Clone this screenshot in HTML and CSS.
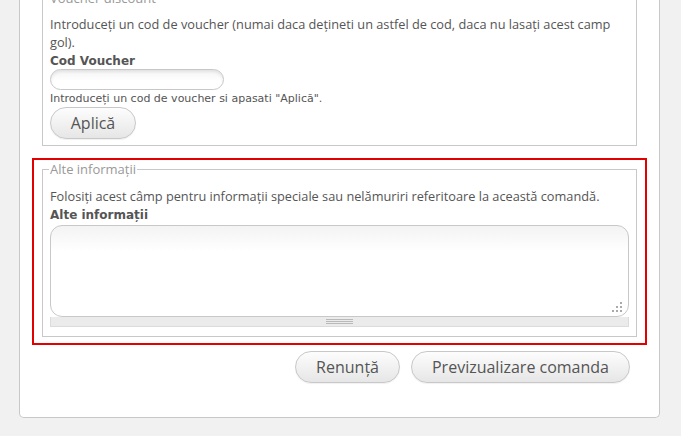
FILE: index.html
```html
<!DOCTYPE html>
<html lang="ro">
<head>
<meta charset="utf-8">
<link rel="stylesheet" href="styles.css">
</head>
<body>
<div class="card">
  <fieldset class="fs voucher">
    <legend>Voucher discount</legend>
    <p class="desc">Introduceți un cod de voucher (numai daca dețineti un astfel de cod, daca nu lasați acest camp gol).</p>
    <label class="lbl">Cod Voucher</label>
    <input class="txt" type="text">
    <div class="hint">Introduceți un cod de voucher si apasati "Aplică".</div>
    <button class="btn apply">Aplică</button>
  </fieldset>
  <div class="highlight">
    <fieldset class="fs info">
      <legend>Alte informații</legend>
      <p class="desc">Folosiți acest câmp pentru informații speciale sau nelămuriri referitoare la această comandă.</p>
      <label class="lbl">Alte informații</label>
      <div class="ta-wrap">
        <div class="ta">
          <svg class="grip" width="10" height="10" viewBox="0 0 10 10"><g fill="#aaa"><rect x="8" y="0" width="2" height="2"/><rect x="4" y="4" width="2" height="2"/><rect x="8" y="4" width="2" height="2"/><rect x="0" y="8" width="2" height="2"/><rect x="4" y="8" width="2" height="2"/><rect x="8" y="8" width="2" height="2"/></g></svg>
        </div>
        <div class="grippie"><span></span></div>
      </div>
    </fieldset>
  </div>
  <div class="actions">
    <button class="btn">Renunță</button>
    <button class="btn">Previzualizare comanda</button>
  </div>
</div>
</body>
</html>
```
FILE: styles.css
```css
html, body { margin: 0; padding: 0; }
body {
  background: #f1f1f1;
  font-family: "Open Sans", "DejaVu Sans", sans-serif;
  color: #555;
  height: 436px;
  overflow: hidden;
}
.card {
  margin: -11px 0 0 19px;
  width: 639px;
  background: #fff;
  border: 1px solid #c8c8c8;
  border-top: none;
  border-radius: 0 0 5px 5px;
  padding: 0 0 34px 0;
}
.fs {
  margin: 0 22px 0 22px;
  border: 1px solid #c8c8c8;
  padding: 0 7px 6px 7px;
}
.fs legend {
  color: #999;
  font-size: 13px;
  line-height: 18px;
  padding: 0 1px;
  margin-left: -1px;
}
.desc {
  margin: 8px 0 0 0;
  font-size: 12.75px;
  line-height: 18px;
}
.lbl {
  display: block;
  font-family: "DejaVu Sans", sans-serif;
  font-weight: bold;
  font-size: 12px;
  line-height: 19px;
  padding-top: 1px;
  color: #555;
}
.txt {
  display: block;
  box-sizing: border-box;
  width: 174px;
  height: 21px;
  margin: -2px 0 0 0;
  border: 1px solid #c8c8c8;
  border-radius: 11px;
  background: linear-gradient(#f4f4f4, #fff 60%);
  box-shadow: inset 0 2px 3px rgba(0,0,0,0.08);
  outline: none;
}
.hint {
  font-family: "DejaVu Sans", sans-serif;
  font-size: 11px;
  line-height: 17px;
}
.btn {
  display: inline-block;
  box-sizing: border-box;
  height: 32px;
  padding: 0 20px;
  border: 1px solid #c8c8c8;
  border-radius: 16px;
  background: linear-gradient(#fdfdfd, #e6e6e6);
  box-shadow: 0 1px 1px rgba(0,0,0,0.06);
  font-family: "Open Sans", "DejaVu Sans", sans-serif;
  font-size: 16px;
  color: #555;
}
.apply { display: block; width: 86px; padding: 0; }
.highlight {
  margin: 12px 12px 0 12px;
  border: 2px solid #e30000;
  padding: 0 8px 6px 8px;
}
.info { margin: 0; padding-bottom: 9px; }
.info .desc { margin-top: 9px; }
.ta {
  position: relative;
  box-sizing: border-box;
  height: 92px;
  border: 1px solid #c8c8c8;
  border-radius: 12px;
  background: linear-gradient(#f3f3f3, #fff 25px);
}
.grip { position: absolute; right: 6px; bottom: 4px; }
.grippie {
  box-sizing: border-box;
  height: 10px;
  background: #ebebeb;
  border: 1px solid #dcdcdc;
  border-top: none;
  display: flex;
  justify-content: center;
  align-items: center;
}
.grippie span {
  width: 27px;
  height: 5px;
  border-top: 1px solid #b9b9b9;
  border-bottom: 1px solid #b9b9b9;
  box-sizing: border-box;
  background: linear-gradient(transparent 1px, #b9b9b9 1px, #b9b9b9 2px, transparent 2px);
}
.actions {
  display: flex;
  justify-content: flex-end;
  gap: 11px;
  margin: 6px 29px 0 0;
}
```
